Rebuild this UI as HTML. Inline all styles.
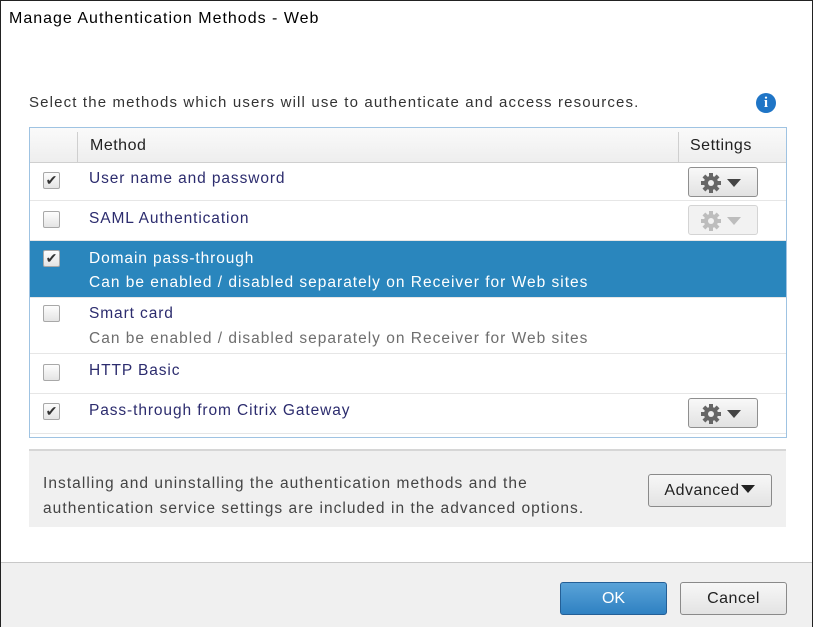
<!DOCTYPE html>
<html><head><style>
body{margin:0;width:813px;height:627px;position:relative;overflow:hidden;background:#fff;font-family:"Liberation Sans",sans-serif;}
.frame{position:absolute;left:0;top:0;width:811px;height:625px;border:1px solid #222;}
.a{position:absolute;white-space:nowrap;}
.title{left:9px;top:10px;font-size:16px;color:#000;letter-spacing:1px;}
.intro{left:29px;top:94px;font-size:15px;color:#333;letter-spacing:1.15px;}
.info{left:756px;top:93px;width:20px;height:20px;border-radius:50%;background:#1f75c6;color:#fff;font-weight:bold;font-size:15px;text-align:center;line-height:20px;font-family:"Liberation Serif",serif;}
.table{position:absolute;left:29px;top:127px;width:756px;height:309px;border:1px solid #9fc3e2;}
.hdr{position:absolute;left:0;top:0;width:756px;height:34px;background:linear-gradient(#fafafa,#eeeeee);border-bottom:1px solid #cfcfcf;}
.vd{position:absolute;top:4px;width:1px;height:30px;background:#cfcfcf;}
.row{position:absolute;left:0;width:756px;border-bottom:1px solid #e6e6e6;}
.cb{position:absolute;left:13px;width:17px;height:17px;border:1px solid #a8a8a8;border-radius:2px;background:linear-gradient(#fdfdfd,#e4e4e4);box-sizing:border-box;font-size:14px;line-height:15px;text-align:center;color:#333;}
.t{position:absolute;left:59px;font-size:15.5px;color:#2c2c6e;letter-spacing:0.9px;}
.s{position:absolute;left:59px;font-size:15.5px;color:#6e6e6e;letter-spacing:1px;}
.sel{background:#2a86bd;}
.sel .t,.sel .s{color:#fff;}
.gear{position:absolute;left:658px;width:70px;height:30px;border:1px solid #8f8f8f;border-radius:3px;background:linear-gradient(#f8f8f8,#e2e2e2);box-sizing:border-box;}
.gear.dis{border-color:#d4d4d4;background:#f2f2f2;}
.panel{position:absolute;left:29px;top:449px;width:757px;height:78px;background:#f0f0f0;border-top:2px solid #d6d6d6;box-sizing:border-box;}
.btn{position:absolute;border:1px solid #8a8a8a;border-radius:3px;background:linear-gradient(#f7f7f7,#e3e3e3);font-size:16px;color:#222;text-align:center;box-sizing:border-box;}
.footer{position:absolute;left:1px;top:562px;width:811px;height:64px;background:#f0f0f0;border-top:1px solid #c8c8c8;}
</style></head><body>
<div class="frame"></div>
<div class="a title">Manage Authentication Methods - Web</div>
<div class="a intro">Select the methods which users will use to authenticate and access resources.</div>
<div class="a info">i</div>
<div class="table">
 <div class="hdr">
  <div class="vd" style="left:47px"></div>
  <div class="vd" style="left:648px"></div>
  <div class="a" style="left:60px;top:9px;font-size:16px;color:#222;letter-spacing:0.5px">Method</div>
  <div class="a" style="left:660px;top:9px;font-size:16px;color:#222;letter-spacing:0.5px">Settings</div>
 </div>
 <div class="row" style="top:35px;height:37px"><div class="cb" style="top:9px">✔</div><div class="t" style="top:7px">User name and password</div>
  <div class="gear" style="top:4px"><svg width="70" height="30" viewBox="0 0 70 30"><g transform="translate(22,15)" fill="#666"><circle r="7"/><g><rect x="-2" y="-10" width="4" height="20"/><rect x="-10" y="-2" width="20" height="4"/><rect x="-2" y="-10" width="4" height="20" transform="rotate(45)"/><rect x="-2" y="-10" width="4" height="20" transform="rotate(-45)"/></g><circle r="3" fill="#eee"/></g><path d="M38 11h14l-7 8z" fill="#444"/></svg></div></div>
 <div class="row" style="top:73px;height:39px"><div class="cb" style="top:10px"></div><div class="t" style="top:9px">SAML Authentication</div>
  <div class="gear dis" style="top:4px"><svg width="70" height="30" viewBox="0 0 70 30"><g transform="translate(22,15)" fill="#bdbdbd"><circle r="7"/><rect x="-2" y="-10" width="4" height="20"/><rect x="-10" y="-2" width="20" height="4"/><rect x="-2" y="-10" width="4" height="20" transform="rotate(45)"/><rect x="-2" y="-10" width="4" height="20" transform="rotate(-45)"/><circle r="3" fill="#f2f2f2"/></g><path d="M38 11h14l-7 8z" fill="#bdbdbd"/></svg></div></div>
 <div class="row sel" style="top:113px;height:56px"><div class="cb" style="top:9px">✔</div><div class="t" style="top:9px">Domain pass-through</div><div class="s" style="top:33px">Can be enabled / disabled separately on Receiver for Web sites</div></div>
 <div class="row" style="top:170px;height:55px"><div class="cb" style="top:7px"></div><div class="t" style="top:7px">Smart card</div><div class="s" style="top:32px">Can be enabled / disabled separately on Receiver for Web sites</div></div>
 <div class="row" style="top:226px;height:39px"><div class="cb" style="top:10px"></div><div class="t" style="top:8px">HTTP Basic</div></div>
 <div class="row" style="top:266px;height:39px"><div class="cb" style="top:9px">✔</div><div class="t" style="top:8px">Pass-through from Citrix Gateway</div>
  <div class="gear" style="top:4px"><svg width="70" height="30" viewBox="0 0 70 30"><g transform="translate(22,15)" fill="#666"><circle r="7"/><rect x="-2" y="-10" width="4" height="20"/><rect x="-10" y="-2" width="20" height="4"/><rect x="-2" y="-10" width="4" height="20" transform="rotate(45)"/><rect x="-2" y="-10" width="4" height="20" transform="rotate(-45)"/><circle r="3" fill="#eee"/></g><path d="M38 11h14l-7 8z" fill="#444"/></svg></div></div>
</div>
<div class="panel">
 <div class="a" style="left:14px;top:20px;font-size:15.5px;color:#444;line-height:25px;letter-spacing:1.05px">Installing and uninstalling the authentication methods and the<br>authentication service settings are included in the advanced options.</div>
 <div class="btn" style="left:619px;top:23px;width:124px;height:33px;line-height:31px;letter-spacing:0.5px">Advanced<svg width="16" height="10" viewBox="0 0 16 10" style="vertical-align:1px"><path d="M1 1h14l-7 8z" fill="#222"/></svg></div>
</div>
<div class="footer"></div>
<div class="btn" style="left:560px;top:582px;width:107px;height:33px;line-height:31px;background:linear-gradient(#5aa3d8,#2f81c2);border-color:#245f96;color:#fff">OK</div>
<div class="btn" style="left:680px;top:582px;width:107px;height:33px;line-height:31px;letter-spacing:0.5px">Cancel</div>
</body></html>
